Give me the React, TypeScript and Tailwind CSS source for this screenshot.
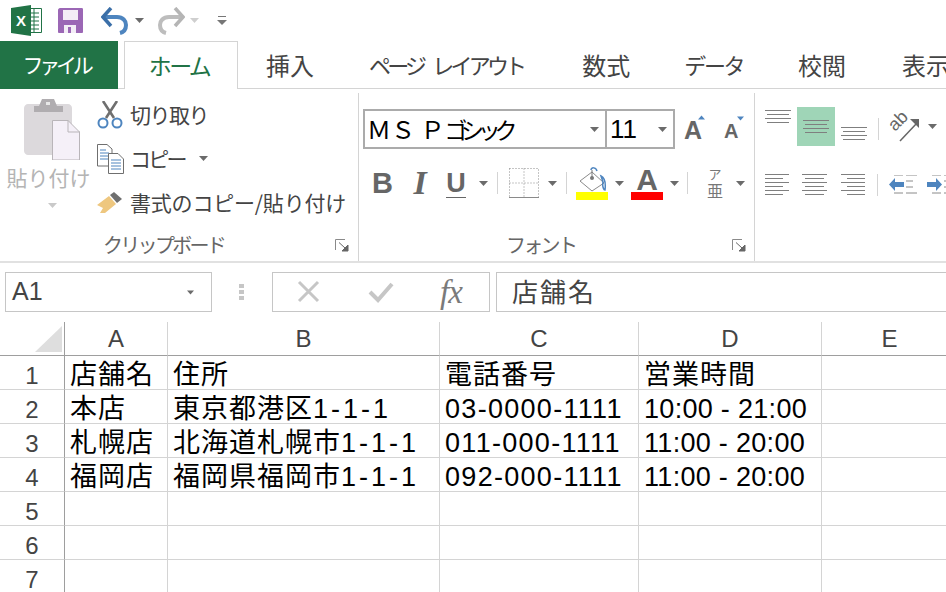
import React from "react";

const JP = "font-['Noto_Sans_CJK_JP','Noto_Sans',sans-serif]";

function Caret({ color = "#6b6b6b", w = 9, className = "" }: { color?: string; w?: number; className?: string }) {
  return (
    <svg width={w} height={5} viewBox="0 0 9 5" className={className}>
      <path d="M0 0H9L4.5 5Z" fill={color} />
    </svg>
  );
}

function Lines({ rows, w = 26, h = 15, color = "#7f7f7f", step = 4 }: { rows: [number, number][]; w?: number; h?: number; color?: string; step?: number }) {
  return (
    <svg width={w} height={h} viewBox={`0 0 ${w} ${h}`} className="shrink-0">
      {rows.map(([a, b], i) => (
        <rect key={i} x={a} y={i * step} width={b - a} height={1} fill={color} />
      ))}
    </svg>
  );
}

function Launcher() {
  return (
    <svg width={15} height={13} viewBox="0 0 15 13">
      <path d="M.5 11V.5H10" fill="none" stroke="#8a8a8a" />
      <path d="M4 3.5L10 9M13 6V12H7Z" stroke="#666" fill="#666" strokeWidth="1" />
    </svg>
  );
}

function VSep({ h = 22, className = "" }: { h?: number; className?: string }) {
  return <div className={`w-px bg-[#d4d4d4] shrink-0 ${className}`} style={{ height: h }} />;
}

function QuickAccess() {
  return (
    <div className="h-[41px] flex items-center pl-[11px]">
      <svg width={31} height={31} viewBox="0 0 31 31" className="shrink-0">
        <path d="M11 3.500H30.500V27.500H11Z" fill="#fff" stroke="#217346" strokeWidth="1" />
        <path d="M18 8H28M18 12H28M18 16H28M18 20H28M18 24H28M23 4V27" stroke="#217346" strokeWidth="1" fill="none" />
        <path d="M0 3L20 0V31L0 28Z" fill="#217346" />
        <text x="10" y="21" textAnchor="middle" fontSize="15" fontWeight="700" fill="#fff" fontFamily="Liberation Sans">X</text>
      </svg>
      <svg width={26} height={26} viewBox="0 0 26 26" className="ml-[15px] shrink-0">
        <path d="M1 2C1 1 2 0 3 0H25C26 0 26 1 26 2V24C26 25 25 25 24 25H3C2 25 1 25 1 24Z" fill="#9b67b5" />
        <rect x="6" y="2" width="15" height="10" fill="#f3edf6" />
        <rect x="7" y="17" width="12" height="8" fill="#f3edf6" />
        <rect x="11" y="19" width="3" height="6" fill="#9b67b5" />
      </svg>
      <svg width={28} height={28} viewBox="0 0 28 28" className="ml-[18px] shrink-0">
        <path d="M3 10H16C22 10 25 14 25 18C25 22 23 25 19 26" fill="none" stroke="#4e85bf" strokeWidth="4" />
        <path d="M10 1L2 10L10 19" fill="none" stroke="#3b6fa8" strokeWidth="3.5" />
      </svg>
      <Caret className="ml-[6px]" />
      <svg width={28} height={28} viewBox="0 0 28 28" className="ml-[13px] shrink-0">
        <path d="M25 10H12C6 10 3 14 3 18C3 22 5 25 9 26" fill="none" stroke="#bdbdbd" strokeWidth="4" />
        <path d="M18 1L26 10L18 19" fill="none" stroke="#b5b5b5" strokeWidth="3.5" />
      </svg>
      <Caret color="#cfcfcf" className="ml-[5px]" />
      <svg width={10} height={9} viewBox="0 0 10 9" className="ml-[18px] shrink-0">
        <rect x="1" y="0" width="8" height="1" fill="#777" />
        <path d="M0 4H10L5 9Z" fill="#777" />
      </svg>
    </div>
  );
}

function Tabs() {
  const items: [string, string, string][] = [
    ["挿入", "ml-[28px]", "text-[24px]"],
    ["ページ レイアウト", "ml-[55px]", "text-[22px] tracking-[-3.8px] [word-spacing:8px]"],
    ["数式", "ml-[59px]", "text-[24px]"],
    ["データ", "ml-[54px]", "text-[22px] tracking-[-2.4px]"],
    ["校閲", "ml-[55px]", "text-[24px]"],
    ["表示", "ml-[56px]", "text-[24px]"],
  ];
  return (
    <div className={`h-[48px] flex border-b border-[#d4d4d4] ${JP} text-[#444] overflow-visible`}>
      <div className="w-[118px] h-[48px] bg-[#217346] text-white flex items-center justify-center text-[21px] tracking-[-4.300px] pr-[6px] shrink-0">ファイル</div>
      <div className="ml-[6px] w-[114px] h-[48px] bg-white border border-b-0 border-[#d4d4d4] text-[#217346] flex items-center justify-center text-[23px] tracking-[-2.6px] pr-[4px] shrink-0">ホーム</div>
      {items.map(([t, m, k]) => (
        <div key={t} className={`${m} ${k} flex items-center whitespace-pre shrink-0`}>{t}</div>
      ))}
    </div>
  );
}

function GroupLabel({ children, className = "" }: { children: string; className?: string }) {
  return <div className={`${JP} text-[20px] leading-[28px] text-[#666] tracking-[-2.7px] ${className}`}>{children}</div>;
}

function Clipboard() {
  return (
    <div className="w-[359px] h-[168px] mt-[4px] border-r border-[#d4d4d4] flex flex-col shrink-0">
      <div className="flex h-[134px]">
        <div className="w-[97px] flex flex-col items-center pt-[5px] shrink-0">
          <svg width={58} height={62} viewBox="0 0 58 62" className="ml-[8px]">
            <path d="M4 6H44C46 6 48 8 48 10V53C48 55 46 57 44 57H4C2 57 0 55 0 53V10C0 8 2 6 4 6Z" fill="#dcd9dc" />
            <path d="M10 8H15L18 1H30L33 8H39V14H10Z" fill="#b0adb0" />
            <rect x="22" y="4" width="4" height="3" fill="#e8e8e8" />
            <path d="M28.5 22.500H44L55.500 34V62H28.500Z" fill="#f5f0f8" stroke="#b9b5b9" />
            <path d="M44 22V34H56" fill="none" stroke="#b9b5b9" />
          </svg>
          <div className={`${JP} text-[21px] leading-[28px] text-[#b4b4b4] mt-[3px] whitespace-nowrap`}>貼り付け</div>
          <Caret color="#c9c9c9" className="mt-[12px] ml-[8px]" />
        </div>
        <div className={`${JP} text-[21px] text-[#444] flex flex-col whitespace-nowrap`}>
          <div className="h-[44px] flex items-center">
            <svg width={26} height={28} viewBox="0 0 26 28" className="shrink-0">
              <path d="M6 0L17 17M20 0L9 17" stroke="#6f6f6f" strokeWidth="2.6" />
              <circle cx="6" cy="22" r="4.500" fill="none" stroke="#4e85bf" strokeWidth="2" />
              <circle cx="20" cy="22" r="4.500" fill="none" stroke="#4e85bf" strokeWidth="2" />
            </svg>
            <span className="ml-[7px] tracking-[-1.5px]">切り取り</span>
          </div>
          <div className="h-[43px] flex items-center">
            <svg width={27} height={30} viewBox="0 0 27 30" className="shrink-0">
              <path d="M.5 .5H10L15 5V22H.5Z" fill="#fff" stroke="#6f6f6f" />
              <path d="M3 6H9M3 9H12M3 12H12M3 15H12" stroke="#4e85bf" />
              <path d="M11.500 9.500H21L26.500 15V29.500H11.500Z" fill="#fff" stroke="#6f6f6f" />
              <path d="M14 16H24M14 19H24M14 22H24M14 25H24" stroke="#4e85bf" />
            </svg>
            <span className="ml-[6px] tracking-[-2.8px]">コピー</span>
            <Caret className="ml-[14px]" />
          </div>
          <div className="h-[46px] flex items-center">
            <svg width={26} height={24} viewBox="0 0 26 24" className="shrink-0">
              <path d="M0 14L12 5L19 13L8 22L3 22L6 17Z" fill="#eec77f" />
              <path d="M13 4L17 1L25 8L20 12Z" fill="#6f6f6f" />
            </svg>
            <span className="ml-[7px] tracking-[-0.2px]">書式のコピー/貼り付け</span>
          </div>
        </div>
      </div>
      <div className="flex items-center h-[28px] mt-[4px]">
        <GroupLabel className="ml-[103px]">クリップボード</GroupLabel>
        <div className="ml-auto mr-[8px] flex"><Launcher /></div>
      </div>
    </div>
  );
}

function Font() {
  return (
    <div className="w-[396px] h-[168px] mt-[4px] border-r border-[#d4d4d4] flex flex-col shrink-0 pl-[4px]">
      <div className="flex items-center pt-[16px]">
        <div className="w-[243px] h-[40px] border-2 border-r border-[#ababab] flex items-center pl-[2px] pr-[6px] shrink-0">
          <span className={`${JP} text-[24px] text-black whitespace-nowrap`}>ＭＳ Ｐ<span className="text-[23px] tracking-[-6.300px]">ゴシック</span></span>
          <Caret className="ml-auto" />
        </div>
        <div className="w-[69px] h-[40px] border-2 border-l border-[#ababab] flex items-center pl-[3px] pr-[6px] shrink-0">
          <span className="font-['Liberation_Sans',sans-serif] text-[26px] text-black">11</span>
          <Caret className="ml-auto" />
        </div>
        <div className="relative ml-[9px] flex flex-col items-center">
          <Caret color="#4e85bf" w={7} className="rotate-180 self-end mb-[-3px] mr-[-3px]" />
          <span className="font-['Liberation_Sans',sans-serif] text-[25px] leading-[26px] text-[#666] font-bold">A</span>
        </div>
        <div className="ml-[22px] flex flex-col items-center">
          <Caret color="#4e85bf" w={7} className="self-end mb-[-2px] mr-[-5px]" />
          <span className="font-['Liberation_Sans',sans-serif] text-[20px] leading-[24px] text-[#666] font-bold">A</span>
        </div>
      </div>
      <div className="flex items-center h-[36px] mt-[16px] text-[#666] font-['Liberation_Sans',sans-serif]">
        <span className="ml-[9px] w-[20px] text-[29px] font-bold leading-none text-center">B</span>
        <span className="ml-[18px] w-[20px] text-[34px] font-bold italic font-['Liberation_Serif',serif] leading-none text-center">I</span>
        <span className="ml-[16px] w-[20px] text-[27px] font-bold leading-[28px] text-center border-b border-[#666]">U</span>
        <Caret className="ml-[13px]" />
        <VSep className="ml-[9px]" />
        <svg width={30} height={30} viewBox="0 0 30 30" className="ml-[11px] shrink-0">
          <path d="M.5 .5H29.500V29M.5 .5V29M15 .5V29M.5 15H29.500" fill="none" stroke="#8a8a8a" strokeDasharray="1 2" />
          <path d="M0 29.500H30" stroke="#8a8a8a" />
        </svg>
        <Caret className="ml-[9px]" />
        <VSep className="ml-[9px]" />
        <div className="ml-[9px] w-[32px] flex flex-col items-center shrink-0">
          <svg width={30} height={25} viewBox="0 0 30 25">
            <path d="M15 5L27 16L15 24L3 14Z" fill="#fff" stroke="#8a8a8a" />
            <path d="M15 3V10" stroke="#777" /><circle cx="15" cy="11" r="2" fill="#777" />
            <path d="M14 3C14 0 19 0 20 4M24 9C28 11 29 15 28 23C27 23 25 20 26 15Z" fill="none" stroke="#4e85bf" strokeWidth="1.500" />
          </svg>
          <div className="w-[32px] h-[8px] bg-[#ffff00]" />
        </div>
        <Caret className="ml-[7px]" />
        <div className="ml-[7px] w-[32px] flex flex-col items-center shrink-0">
          <span className="text-[30px] leading-[25px] font-bold h-[25px]">A</span>
          <div className="w-[32px] h-[8px] bg-[#ff0000]" />
        </div>
        <Caret className="ml-[7px]" />
        <VSep className="ml-[8px]" />
        <div className={`${JP} ml-[19px] w-[16px] flex flex-col items-center text-[#777] shrink-0`}>
          <span className="text-[13px] leading-[14px]">ア</span>
          <span className="text-[16px] leading-[18px]">亜</span>
        </div>
        <Caret className="ml-[13px]" />
      </div>
      <div className="flex items-center h-[28px] mt-[30px]">
        <GroupLabel className="ml-[143px]">フォント</GroupLabel>
        <div className="ml-auto mr-[7px] flex"><Launcher /></div>
      </div>
    </div>
  );
}

function Alignment() {
  const top: [number, number][] = [[0, 26], [2, 24], [0, 26], [2, 24]];
  return (
    <div className="h-[168px] mt-[4px] flex flex-col pl-[10px] shrink-0 w-[192px] overflow-hidden">
      <div className="flex h-[39px] mt-[14px] shrink-0">
        <div className="pt-[3px] flex">
          <Lines rows={top} h={14} />
        </div>
        <div className="ml-[6px] w-[38px] h-[39px] bg-[#9fd5b7] flex items-center justify-center shrink-0">
          <Lines rows={top} h={14} />
        </div>
        <div className="ml-[6px] pt-[20px] flex"><Lines rows={top} h={14} /></div>
        <VSep className="ml-[11px] mt-[11px]" />
        <svg width={32} height={30} viewBox="0 0 32 30" className="ml-[11px] mt-[6px] shrink-0 overflow-visible">
          <path d="M10 28L27 10" stroke="#666" strokeWidth="1.500" />
          <path d="M20 6H29V15Z" fill="#666" />
          <text x="5" y="19" fontSize="18" fill="#666" fontFamily="Liberation Sans" transform="rotate(-45 5 19)">ab</text>
        </svg>
        <Caret className="ml-[6px] mt-[17px]" />
      </div>
      <div className="flex items-center h-[26px] mt-[26px] shrink-0">
        <Lines rows={[[0, 24], [0, 18], [0, 24], [0, 18], [0, 24], [0, 18]]} w={25} h={22} />
        <div className="ml-[12px]"><Lines rows={[[0, 25], [3, 22], [0, 25], [3, 22], [0, 25], [3, 22]]} w={25} h={22} /></div>
        <div className="ml-[14px]"><Lines rows={[[0, 24], [6, 24], [0, 24], [6, 24], [0, 24], [6, 24]]} w={24} h={22} /></div>
        <VSep className="ml-[12px]" />
        <svg width={29} height={20} viewBox="0 0 29 20" className="ml-[11px] shrink-0">
          <path d="M5 0H14M5 18H14M17 0H28M17 6H24M17 12H24M17 18H28" stroke="#8a8a8a" />
          <path d="M0 9.500L6 3V7H15V12H6V16Z" fill="#4e85bf" />
        </svg>
        <svg width={29} height={20} viewBox="0 0 29 20" className="ml-[9px] shrink-0">
          <path d="M5 0H14M5 18H14M17 0H28M17 6H24M17 12H24M17 18H28" stroke="#8a8a8a" />
          <path d="M15 9.500L9 3V7H0V12H9V16Z" fill="#4e85bf" />
        </svg>
      </div>
    </div>
  );
}

function FormulaBar() {
  return (
    <div className="h-[61px] flex items-start pt-[9px] pl-[5px] border-t-2 border-[#e1e1e1]">
      <div className="w-[207px] h-[40px] border border-[#c6c6c6] flex items-center pl-[6px] pr-[17px] shrink-0 font-['Liberation_Sans',sans-serif] text-[25px] text-[#444]">
        A1<Caret w={7} className="ml-auto" />
      </div>
      <div className="ml-[27px] mt-[12px] flex flex-col gap-[2px] shrink-0">
        <div className="w-[5px] h-[4px] bg-[#c6c6c6]" />
        <div className="w-[5px] h-[4px] bg-[#c6c6c6]" />
        <div className="w-[5px] h-[4px] bg-[#c6c6c6]" />
      </div>
      <div className="ml-[28px] w-[218px] h-[40px] border border-[#c6c6c6] flex items-center shrink-0">
        <svg width={24} height={24} viewBox="0 0 24 24" className="ml-[24px] shrink-0">
          <path d="M2 2L21 21M21 2L2 21" stroke="#c6c6c6" strokeWidth="3" />
        </svg>
        <svg width={26} height={22} viewBox="0 0 26 22" className="ml-[47px] shrink-0">
          <path d="M2 11L10 19L24 3" fill="none" stroke="#c6c6c6" strokeWidth="4" />
        </svg>
        <span className="ml-[46px] font-['Liberation_Serif',serif] italic text-[33px] leading-none text-[#7a7a7a] tracking-[-1px]">fx</span>
      </div>
      <div className={`ml-[6px] flex-1 h-[40px] border border-r-0 border-[#c6c6c6] flex items-center pl-[15px] pb-[3px] ${JP} text-[26px] tracking-[2px] text-[#444]`}>店舗名</div>
    </div>
  );
}

type Row = [string, string, string, string];
const rows: Row[] = [
  ["店舗名", "住所", "電話番号", "営業時間"],
  ["本店", "東京都港区|1-1-1", "03-0000-1111", "10:00 - 21:00"],
  ["札幌店", "北海道札幌市|1-1-1", "011-000-1111", "11:00 - 20:00"],
  ["福岡店", "福岡県福岡市|1-1-1", "092-000-1111", "11:00 - 20:00"],
  ["", "", "", ""],
  ["", "", "", ""],
  ["", "", "", ""],
];

const colTracking = ["tracking-[1px]", "tracking-[1px]", "tracking-[1.300px]", "tracking-[0.300px]"];

function Sheet() {
  const cols = ["A", "B", "C", "D", "E"];
  const head = "h-[34px] flex items-center justify-center border-r border-[#d4d4d4] border-b border-b-[#9e9e9e] text-[24px] text-[#444]";
  const cell = `h-[34px] border-r border-b border-[#d4d4d4] pl-[5px] pt-[6px] flex items-center whitespace-pre overflow-hidden text-[27px] text-black font-['Liberation_Sans','Noto_Sans_CJK_JP',sans-serif]`;
  return (
    <div className="grid grid-cols-[65px_103px_272px_199px_183px_136px] font-['Liberation_Sans',sans-serif]">
      <div className="relative h-[34px] border-r border-b border-[#9e9e9e]">
        <svg width={27} height={26} viewBox="0 0 27 26" className="absolute left-[35px] top-[4px]">
          <path d="M27 0V26H0Z" fill="#dedede" />
        </svg>
      </div>
      {cols.map((c) => (
        <div key={c} className={head}>{c}</div>
      ))}
      {rows.map((r, i) => (
        <React.Fragment key={i}>
          <div className="h-[34px] border-r border-r-[#9e9e9e] border-b border-b-[#d4d4d4] flex items-center justify-center pt-[6px] text-[24px] text-[#444]">{i + 1}</div>
          {r.map((t, j) => {
            const [a, b] = t.split("|");
            return (
              <div key={j} className={`${cell} ${i === 0 ? "tracking-[1px]" : colTracking[j]}`}>
                <span>{a}{b ? <span className="tracking-[3px]">{b}</span> : null}</span>
              </div>
            );
          })}
          <div className={cell} />
        </React.Fragment>
      ))}
    </div>
  );
}

export default function App() {
  return (
    <div className="w-[946px] h-[592px] overflow-hidden bg-white">
      <QuickAccess />
      <Tabs />
      <div className="h-[172px] flex overflow-hidden">
        <Clipboard />
        <Font />
        <Alignment />
      </div>
      <FormulaBar />
      <Sheet />
    </div>
  );
}
